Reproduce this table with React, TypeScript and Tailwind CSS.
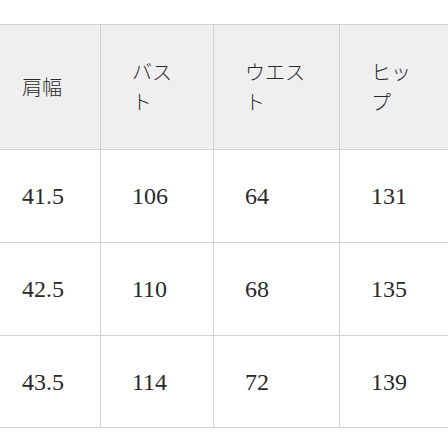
const headers = [
  { label: "肩幅", w: "w-[100px] pl-[22px]", tw: "w-[60px]" },
  { label: "バスト", w: "w-[113px] pl-[31px] border-l", tw: "w-[50px]" },
  { label: "ウエスト", w: "w-[126px] pl-[31px] border-l", tw: "w-[70px]" },
  { label: "ヒップ", w: "w-[109px] pl-[31px] border-l", tw: "w-[50px]" },
];

const rows = [
  ["41.5", "106", "64", "131"],
  ["42.5", "110", "68", "135"],
  ["43.5", "114", "72", "139"],
];

export default function App() {
  return (
    <div className="w-[448px] h-[448px] bg-white overflow-hidden pt-[24px] text-[#2a2a2a]">
      <div className="flex h-[125px] border-t border-[#d2d2d2] bg-[#efefef]">
        {headers.map((h) => (
          <div
            key={h.label}
            className={`${h.w} flex items-center border-[#d2d2d2]`}
          >
            <span
              className={`${h.tw} text-[20px] leading-[30px] font-light break-all`}
              style={{ fontFamily: '"Noto Sans CJK JP", sans-serif' }}
            >
              {h.label}
            </span>
          </div>
        ))}
      </div>
      {rows.map((r, i) => (
        <div
          key={i}
          className={`flex h-[93px] border-t border-[#d2d2d2] ${i === rows.length - 1 ? "border-b" : ""}`}
        >
          {r.map((v, j) => (
            <div
              key={j}
              className={`${headers[j].w} flex items-center border-[#d2d2d2] text-[24px]`}
              style={{ fontFamily: '"Liberation Serif", serif' }}
            >
              {v}
            </div>
          ))}
        </div>
      ))}
    </div>
  );
}
